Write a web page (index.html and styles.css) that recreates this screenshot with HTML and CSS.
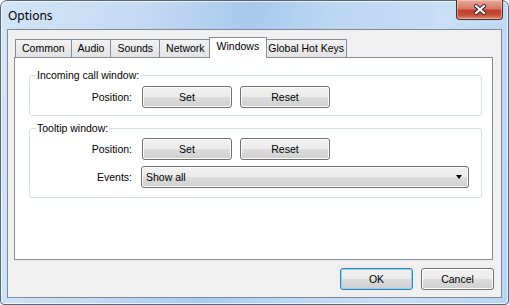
FILE: index.html
```html
<!DOCTYPE html>
<html lang="en">
<head>
  <meta charset="UTF-8">
  <title>Options</title>
  <link rel="stylesheet" href="styles.css">
</head>
<body>

  <div class="window">
    <div class="titlebar">
      <span class="title">Options</span>
      <div class="close">
        <svg width="12" height="11" viewBox="0 0 12 11">
          <path d="M2 2 L10 9 M10 2 L2 9" stroke="#3b2a28" stroke-width="4" stroke-linecap="square"/>
          <path d="M2 2 L10 9 M10 2 L2 9" stroke="#fff" stroke-width="2" stroke-linecap="square"/>
        </svg>
      </div>
    </div>

    <div class="client">
      <div class="tabs">
        <div class="tab">Common</div>
        <div class="tab">Audio</div>
        <div class="tab">Sounds</div>
        <div class="tab">Network</div>
        <div class="tab active">Windows</div>
        <div class="tab tight">Global Hot Keys</div>
      </div>

      <div class="panel">
        <fieldset class="group">
          <legend>Incoming call window:</legend>
          <div class="row">
            <span class="label">Position:</span>
            <button class="btn wide">Set</button>
            <button class="btn wide">Reset</button>
          </div>
        </fieldset>

        <fieldset class="group second">
          <legend>Tooltip window:</legend>
          <div class="row">
            <span class="label">Position:</span>
            <button class="btn wide">Set</button>
            <button class="btn wide">Reset</button>
          </div>
          <div class="row">
            <span class="label">Events:</span>
            <div class="combo">
              <span>Show all</span>
              <span class="arrow"></span>
            </div>
          </div>
        </fieldset>
      </div>

      <div class="footer">
        <button class="btn dialog default">OK</button>
        <button class="btn dialog">Cancel</button>
      </div>
    </div>
  </div>

</body>
</html>
```

FILE: styles.css
```css
* {
  box-sizing: border-box;
}

body {
  margin: 0;
  font-family: 'Liberation Sans', Arial, sans-serif;
  font-size: 10.5px;
  color: #000;
}

.window {
  width: 509px;
  height: 305px;
  border: 1px solid #56667a;
  border-radius: 7px 7px 4px 4px;
  background: linear-gradient(100deg, #d3e5f7 0%, #c4dbf3 25%, #a9c9ec 45%, #bcd7f2 60%, #c8dff6 80%, #b8d4f1 100%);
  box-shadow: inset 0 0 0 1px rgba(255, 255, 255, 0.7);
  display: flex;
  flex-direction: column;
}

.titlebar {
  height: 28px;
  display: flex;
  justify-content: space-between;
  align-items: flex-start;
}

.title {
  font-family: 'Noto Sans', sans-serif;
  font-size: 12px;
  padding: 6px 0 0 7px;
}

.close {
  width: 47px;
  height: 20px;
  margin: -1px 5px 0 0;
  border: 1px solid #4f2a26;
  border-top: none;
  border-radius: 0 0 4px 4px;
  background: linear-gradient(#e8a99c 0%, #d47a68 45%, #c2402f 55%, #c9503b 80%, #d98a6e 100%);
  box-shadow: inset 0 0 0 1px rgba(255, 220, 210, 0.5);
  display: flex;
  align-items: center;
  justify-content: center;
}

.client {
  flex: 1;
  margin: 0 6px 6px 6px;
  border: 1px solid #7c8b9d;
  background: #f0f0f0;
  padding: 7px 7px 0 6px;
  display: flex;
  flex-direction: column;
}

.tabs {
  display: flex;
  align-items: flex-end;
  height: 20px;
  padding-left: 1px;
}

.tab {
  height: 18px;
  line-height: 17px;
  padding: 0 6px;
  margin-right: -1px;
  border: 1px solid #898c95;
  border-bottom: none;
  background: linear-gradient(#f2f2f2, #e3e3e3);
}

.tab.tight {
  padding: 0 2px;
}

.tab.active {
  position: relative;
  z-index: 1;
  height: 21px;
  line-height: 17px;
  margin: 0 -2px -1px -2px;
  padding: 0 7px;
  background: #fff;
}

.panel {
  height: 203px;
  margin-right: 1px;
  border: 1px solid #898c95;
  background: #fff;
  padding: 11px 10px 0 14px;
}

.group {
  margin: 0;
  padding: 4px 0 7px 0;
  border: 1px solid #d5dfe5;
  border-radius: 3px;
}

.group.second {
  margin-top: 6px;
  padding: 3px 0 9px 0;
}

.group legend {
  margin-left: 6px;
  padding: 0 1px;
  line-height: 13px;
}

.row {
  display: flex;
  align-items: center;
  gap: 8px;
}

.row + .row {
  margin-top: 6px;
}

.label {
  width: 102px;
  margin-right: 2px;
  text-align: right;
}

.btn {
  height: 22px;
  padding: 0;
  font: inherit;
  color: #000;
  border: 1px solid #707070;
  border-radius: 3px;
  background: linear-gradient(#f2f2f2 0%, #ebebeb 50%, #dddddd 50%, #cfcfcf 100%);
  box-shadow: inset 0 0 0 1px #fcfcfc;
}

.btn.wide {
  width: 90px;
}

.combo {
  width: 328px;
  height: 22px;
  margin-left: -1px;
  padding: 0 6px 0 4px;
  border: 1px solid #707070;
  border-radius: 3px;
  background: linear-gradient(#f2f2f2 0%, #ebebeb 50%, #dddddd 50%, #cfcfcf 100%);
  box-shadow: inset 0 0 0 1px #fcfcfc;
  display: flex;
  align-items: center;
  justify-content: space-between;
}

.arrow {
  width: 0;
  height: 0;
  border-left: 3.5px solid transparent;
  border-right: 3.5px solid transparent;
  border-top: 4px solid #000;
}

.footer {
  display: flex;
  justify-content: flex-end;
  gap: 8px;
  padding-top: 8px;
}

.btn.dialog {
  width: 73px;
}

.btn.default {
  border-color: #3c7fb1;
  box-shadow: inset 0 0 0 1px #8fd6f5;
}
```
